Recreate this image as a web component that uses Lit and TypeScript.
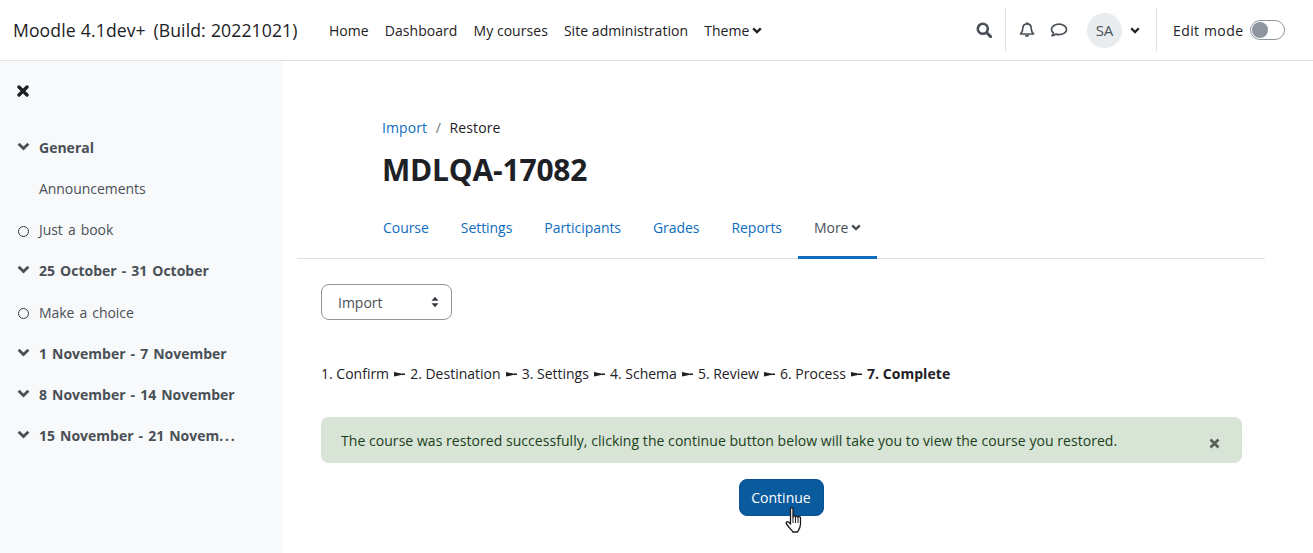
import { LitElement, html, css } from "lit";
import { customElement } from "lit/decorators.js";

const chev = (w = 10, h = 7, sw = 2.400) => html`<svg class="chev" viewBox="0 0 10 7" width=${w} height=${h}><path d="M1.200 1.300 5 5.100 8.800 1.300" fill="none" stroke="currentColor" stroke-width=${sw}/></svg>`;
const arrow = html`<svg class="arrow" viewBox="0 0 11 4.600" width="11" height="4.600"><path d="M0 0 7 1.600H11V3H7L0 4.600Z" fill="#1d2125"/></svg>`;

@customElement("app-root")
export class AppRoot extends LitElement {
  static styles = css`
    :host { display: block; width: 1313px; height: 553px; overflow: hidden; background: #fff; color: #1d2125;
      font-family: "Open Sans", "Noto Sans", sans-serif; font-size: 14px; line-height: 21px; position: relative; }
    a { text-decoration: none; color: inherit; }
    .nav { height: 60px; border-bottom: 1px solid #dee2e6; display: flex; align-items: center; padding-left: 13px; }
    .brand { font-size: 17.6px; width: 316px; white-space: nowrap; letter-spacing: 0.1px; word-spacing: 0.500px; }
    .brand span { margin-left: 2.500px; }
    .links { display: flex; gap: 16px; }
    .links a { display: flex; align-items: center; gap: 3px; letter-spacing: 0.05px; }
    .right { margin-left: auto; display: flex; align-items: center; height: 44px; padding-right: 28px; color: #495057; }
    .search { width: 16px; height: 16px; margin-right: 13px; }
    .sep { width: 1px; height: 44px; background: #dee2e6; }
    .bell { margin: 0 15px 0 13px; width: 16px; height: 16px; }
    .chat { width: 18px; height: 16px; margin-right: 19px; }
    .avatar { width: 35px; height: 35px; border-radius: 50%; background: #e9ecef; display: flex; align-items: center; justify-content: center; font-size: 15px; }
    .achev { margin: 0 16px 0 8px; color: #1d2125; display: flex; }
    .edit { margin-left: 16px; width: 69px; color: #1d2125; letter-spacing: 0.4px; word-spacing: 0.500px; white-space: nowrap; }
    .toggle { margin-left: 8px; width: 35px; height: 20px; box-sizing: border-box; border: 1px solid #8f959e; border-radius: 10px; display: flex; align-items: center; padding-left: 1px; }
    .toggle i { width: 16px; height: 16px; border-radius: 50%; background: #8f959e; }
    .body { display: flex; height: 492px; }
    .side { width: 282px; background: #f8f9fa; flex: none; box-sizing: border-box; padding: 24px 0 0 18px; color: #495057; letter-spacing: -0.05px; word-spacing: 1.500px; }
    .close { width: 12px; height: 12px; display: block; margin: 0 0 30px -1px; color: #1d2125; }
    .row { height: 41.150px; display: flex; align-items: center; white-space: nowrap; }
    .row.sec { font-weight: 700; letter-spacing: 0; word-spacing: 1.400px; }
    .row .ic { width: 21px; flex: none; display: flex; margin-top: -2px; }
    .row .ic .chev { margin-left: -1px; }
    .row.plain .ic { margin-top: 0; }
    .dots { letter-spacing: 1.800px; }
    .circle { width: 11px; height: 11px; box-sizing: border-box; border: 1.500px solid #343a40; border-radius: 50%; margin-top: 3px; }
    .row.indent { padding-left: 21px; }
    .main { flex: 1; padding: 56px 48px 0 15px; }
    .head { padding-left: 85px; }
    .crumb { display: flex; gap: 8.600px; height: 22px; letter-spacing: 0.1px; }
    .crumb a { color: #0f6cbf; }
    .crumb span { color: #6a737b; }
    h1 { margin: 10px 0 0; font-size: 30px; line-height: 42px; font-weight: 700; letter-spacing: -0.2px; }
    .tabs { display: flex; margin-top: 9px; padding-left: 70px; border-bottom: 1px solid #dee2e6; box-sizing: border-box; height: 59px; align-items: stretch; color: #0f6cbf; letter-spacing: -0.05px; }
    .tabs a { padding: 0 16px 5px; display: flex; align-items: center; gap: 3px; box-sizing: border-box; margin-bottom: -1px; }
    .tabs a.act { color: #495057; border-bottom: 3px solid #0f6cbf; padding-bottom: 2px; }
    .content { padding: 25px 23px 0 24px; }
    .sel { width: 131px; height: 36px; box-sizing: border-box; border: 1px solid #8f959e; border-radius: 8px; display: flex; align-items: center; justify-content: space-between; padding: 0 12px 0 16px; color: #495057; }
    .steps { margin-top: 43px; height: 22px; white-space: nowrap; }
    .steps b { letter-spacing: 0.06px; }
    .arrow { margin: 0 1.400px; vertical-align: 2px; }
    .alert { margin-top: 32px; height: 46px; box-sizing: border-box; background: #d7e4d6; color: #1c3f1a; border-radius: 8px; display: flex; align-items: center; justify-content: space-between; padding: 0 22px 0 20px; letter-spacing: 0.05px; white-space: nowrap; }
    .x { width: 11px; height: 11px; color: #555f58; margin-top: 6px; }
    .btnrow { display: flex; justify-content: center; margin-top: 16px; padding-right: 1px; }
    .btn { width: 85px; height: 37px; background: #0a5a9e; color: #fff; border: 1px solid #0a5193; border-radius: 8px; box-sizing: border-box; display: flex; align-items: center; justify-content: center; }
    .cursor { position: absolute; left: 785px; top: 507px; width: 19px; height: 26px; }
  `;

  render() {
    const rows: [unknown, string, boolean][] = [
      ["General", "chev", true],
      ["Announcements", "indent", false],
      ["Just a book", "circle", false],
      ["25 October - 31 October", "chev", true],
      ["Make a choice", "circle", false],
      ["1 November - 7 November", "chev", true],
      ["8 November - 14 November", "chev", true],
      [html`15 November - 21 Novem<span class="dots">...</span>`, "chev", true],
    ];
    return html`
      <div class="nav">
        <div class="brand">Moodle 4.1dev+ <span>(Build: 20221021)</span></div>
        <div class="links">
          <a>Home</a><a>Dashboard</a><a>My courses</a><a>Site administration</a><a>Theme ${chev()}</a>
        </div>
        <div class="right">
          <svg class="search" viewBox="0 0 16 16"><circle cx="6.800" cy="6.800" r="5" fill="none" stroke="currentColor" stroke-width="2.600"/><path d="M10.800 10.800 14.600 14.600" stroke="currentColor" stroke-width="3" stroke-linecap="round"/></svg>
          <div class="sep"></div>
          <svg class="bell" viewBox="0 0 16 16"><path d="M8 1.800c-2.800 0-4.200 2-4.200 4.500 0 3-1 4.400-2.300 5.700h13c-1.300-1.300-2.300-2.700-2.300-5.700C12.200 3.800 10.800 1.800 8 1.800Z" fill="none" stroke="currentColor" stroke-width="1.700" stroke-linejoin="round"/><path d="M6 13c0 1.200.9 2 2 2s2-.8 2-2Z" fill="currentColor"/><circle cx="8" cy="1.500" r="1.200" fill="currentColor"/></svg>
          <svg class="chat" viewBox="0 0 18 16"><path d="M9 2.200c-4.200 0-7.500 2.300-7.500 5.200 0 1.400.8 2.600 2 3.500-.2 1-.8 2-1.500 2.700 1.500-.1 2.800-.7 3.800-1.500 1 .3 2.100.5 3.200.5 4.200 0 7.500-2.300 7.500-5.200S13.200 2.200 9 2.200Z" fill="none" stroke="currentColor" stroke-width="1.700" stroke-linejoin="round"/></svg>
          <div class="avatar">SA</div>
          <span class="achev">${chev(10, 7, 2.200)}</span>
          <div class="sep"></div>
          <span class="edit">Edit mode</span>
          <div class="toggle"><i></i></div>
        </div>
      </div>
      <div class="body">
        <div class="side">
          <svg class="close" viewBox="0 0 12 12"><path d="M2 2 10 10M10 2 2 10" stroke="currentColor" stroke-width="3.400" stroke-linecap="round"/></svg>
          ${rows.map(([t, k, b]) => html`
            <div class="row ${b ? "sec" : "plain"} ${k === "indent" ? "indent" : ""}">
              ${k === "chev" ? html`<span class="ic">${chev(13, 9, 2.200)}</span>` : k === "circle" ? html`<span class="ic"><span class="circle"></span></span>` : ""}
              <span>${t}</span>
            </div>`)}
        </div>
        <div class="main">
          <div class="head">
            <div class="crumb"><a>Import</a><span>/</span><div>Restore</div></div>
            <h1>MDLQA-17082</h1>
          </div>
          <div class="tabs">
            <a>Course</a><a>Settings</a><a>Participants</a><a>Grades</a><a>Reports</a>
            <a class="act">More ${chev()}</a>
          </div>
          <div class="content">
            <div class="sel">Import <svg viewBox="0 0 8 12" width="8" height="12"><path d="M4 .8 7.500 4.800H.5ZM4 11.200 .5 7.200H7.500Z" fill="#343a40"/></svg></div>
            <div class="steps">1. Confirm ${arrow} 2. Destination ${arrow} 3. Settings ${arrow} 4. Schema ${arrow} 5. Review ${arrow} 6. Process ${arrow} <b>7. Complete</b></div>
            <div class="alert">The course was restored successfully, clicking the continue button below will take you to view the course you restored.
              <svg class="x" viewBox="0 0 11 11"><path d="M1.500 1.500 9.500 9.500M9.500 1.500 1.500 9.500" stroke="currentColor" stroke-width="2.600"/></svg>
            </div>
            <div class="btnrow"><div class="btn">Continue</div></div>
          </div>
        </div>
      </div>
      <svg class="cursor" viewBox="0 0 19 26"><path d="M5.500 2c0-1.700 2.500-1.700 2.500 0V10c.2-1.500 2.500-1.500 2.500 0 .2-1.200 2.500-1.200 2.500.3.300-1 2.500-1 2.500.5V17c0 3.500-1.500 5.500-3 8H8c-1.500-2-4-4.500-6.500-8-1-1.500.5-3 2-2l2 2Z" fill="#fff" stroke="#1a1a1a" stroke-width="1.300" stroke-linejoin="round"/><path d="M8 10v6M10.500 10v6M13 10v6" stroke="#1a1a1a"/></svg>
    `;
  }
}
